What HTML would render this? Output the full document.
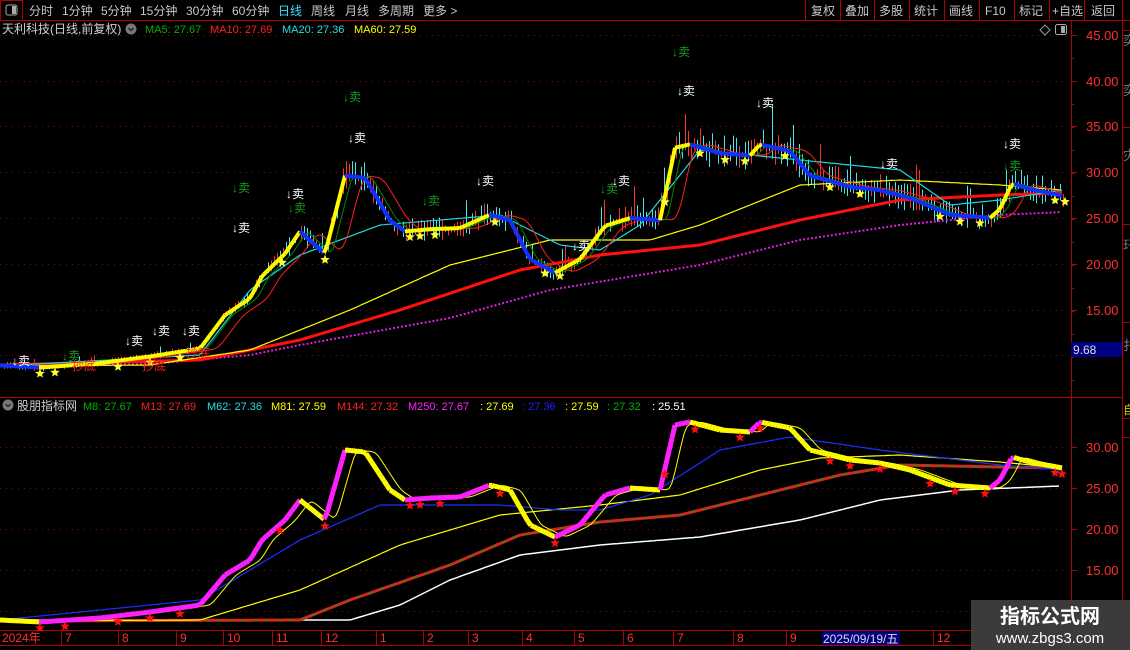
<!DOCTYPE html>
<html><head><meta charset="utf-8"><style>
body{margin:0;background:#000;width:1130px;height:650px;overflow:hidden;font-family:"Liberation Sans","Noto Sans CJK SC",sans-serif;}
svg{position:absolute;left:0;top:0}
</style></head><body>
<svg id="s" width="1130" height="650" xmlns="http://www.w3.org/2000/svg" font-family="Liberation Sans, Noto Sans CJK SC, sans-serif">
<rect width="1130" height="650" fill="#000"/>
<line x1="0" y1="20.5" x2="1130" y2="20.5" stroke="#b00000"/>
<rect x="0.5" y="0.5" width="22" height="20" fill="none" stroke="#b00000"/>
<rect x="6" y="5" width="11" height="10" rx="2" fill="none" stroke="#aaa"/><rect x="12" y="6" width="4" height="8" fill="#aaa"/>
<g font-size="12" fill="#c8c8c8">
<text x="29" y="15">分时</text><text x="62" y="15">1分钟</text><text x="101" y="15">5分钟</text><text x="140" y="15">15分钟</text><text x="186" y="15">30分钟</text><text x="232" y="15">60分钟</text>
<text x="278" y="15" fill="#3ee0ff">日线</text><text x="311" y="15">周线</text><text x="345" y="15">月线</text><text x="378" y="15">多周期</text><text x="423" y="15">更多 &gt;</text>
<text x="811" y="15">复权</text><text x="845" y="15">叠加</text><text x="879" y="15">多股</text><text x="914" y="15">统计</text><text x="949" y="15">画线</text><text x="985" y="15">F10</text><text x="1019" y="15">标记</text><text x="1052" y="15">+自选</text><text x="1091" y="15">返回</text>
</g>
<g stroke="#b00000"><line x1="805.5" y1="0" x2="805.5" y2="20"/><line x1="840.5" y1="0" x2="840.5" y2="20"/><line x1="874.5" y1="0" x2="874.5" y2="20"/><line x1="909.5" y1="0" x2="909.5" y2="20"/><line x1="944.5" y1="0" x2="944.5" y2="20"/><line x1="979.5" y1="0" x2="979.5" y2="20"/><line x1="1014.5" y1="0" x2="1014.5" y2="20"/><line x1="1049.5" y1="0" x2="1049.5" y2="20"/><line x1="1084.5" y1="0" x2="1084.5" y2="20"/><line x1="1122.5" y1="0" x2="1122.5" y2="20"/></g>
<g stroke="#b00000"><line x1="1071.5" y1="20" x2="1071.5" y2="645"/><line x1="1122.5" y1="20" x2="1122.5" y2="650"/><line x1="0" y1="397.5" x2="1122" y2="397.5"/><line x1="0" y1="630.5" x2="1130" y2="630.5"/><line x1="0" y1="645.5" x2="1130" y2="645.5"/>
<line x1="1122" y1="30.5" x2="1130" y2="30.5"/><line x1="1122" y1="127.5" x2="1130" y2="127.5"/><line x1="1122" y1="224.5" x2="1130" y2="224.5"/><line x1="1122" y1="322.5" x2="1130" y2="322.5"/><line x1="1122" y1="418.5" x2="1130" y2="418.5"/><line x1="1122" y1="437.5" x2="1130" y2="437.5"/></g>
<g font-size="13" fill="#777"><text x="1123" y="45">奕</text><text x="1123" y="95">奕</text><text x="1123" y="160">灾</text><text x="1123" y="250">玕</text><text x="1123" y="350">扌</text></g>
<text x="1123" y="414" font-size="12" fill="#cc0">自</text>
<g id="grid"></g>
<g font-size="13" fill="#ff3030" id="ylab"></g>
<rect x="1071" y="342" width="51" height="15" fill="#000080"/>
<text x="1073" y="354" font-size="12" fill="#ddd">9.68</text>
<text x="2" y="33" font-size="12" fill="#d0d0d0">天利科技(日线,前复权)</text>
<circle cx="131" cy="29" r="5.5" fill="#777"/><path d="M128.5 28l2.5 2.5 2.5-2.5" stroke="#222" fill="none" stroke-width="1.3"/>
<g font-size="11"><text x="145" y="33" fill="#00b000">MA5: 27.67</text><text x="210" y="33" fill="#ff2020">MA10: 27.69</text><text x="282" y="33" fill="#20e0e0">MA20: 27.36</text><text x="354" y="33" fill="#ffff00">MA60: 27.59</text></g>
<path d="M1040 30l5-5 5 5-5 5z" fill="none" stroke="#999"/>
<rect x="1055.5" y="24.5" width="11" height="10" rx="2" fill="none" stroke="#aaa"/><rect x="1061" y="26" width="4" height="7" fill="#aaa"/>
<circle cx="8" cy="405" r="5.5" fill="#777"/><path d="M5.5 404l2.5 2.5 2.5-2.5" stroke="#222" fill="none" stroke-width="1.3"/>
<text x="17" y="410" font-size="12" fill="#d0d0d0">股朋指标网</text>
<g font-size="11"><text x="83" y="410" fill="#00b000">M8: 27.67</text><text x="141" y="410" fill="#ff2020">M13: 27.69</text><text x="207" y="410" fill="#20e0e0">M62: 27.36</text><text x="271" y="410" fill="#ffff00">M81: 27.59</text><text x="337" y="410" fill="#ff2020">M144: 27.32</text><text x="408" y="410" fill="#ff20ff">M250: 27.67</text><text x="480" y="410" fill="#ffff00">: 27.69</text><text x="522" y="410" fill="#2020ff">: 27.36</text><text x="565" y="410" fill="#ffff00">: 27.59</text><text x="607" y="410" fill="#00b000">: 27.32</text><text x="652" y="410" fill="#fff">: 25.51</text></g>
<g id="plot"></g>
<g font-size="12" fill="#ff3030" id="dates"></g>
<rect x="822" y="631" width="78" height="14" fill="#000080"/>
<text x="823" y="643" font-size="12" fill="#ddd">2025/09/19/五</text>
<rect x="971" y="600" width="159" height="50" fill="#3c3a3a"/>
<text x="1050" y="623" font-size="20" font-weight="bold" fill="#fff" text-anchor="middle">指标公式网</text>
<text x="1050" y="643" font-size="15" fill="#fff" text-anchor="middle">www.zbgs3.com</text>
</svg>
<script>
var NS="http://www.w3.org/2000/svg";
function el(p,t,a,txt){var e=document.createElementNS(NS,t);for(var k in a)e.setAttribute(k,a[k]);if(txt)e.textContent=txt;document.getElementById(p).appendChild(e);return e;}
function interp(pts,x){for(var i=0;i<pts.length-1;i++){if(x<=pts[i+1][0]){var a=pts[i],b=pts[i+1];return a[1]+(b[1]-a[1])*(x-a[0])/(b[0]-a[0]);}}return pts[pts.length-1][1];}
function poly(pts,step){var s=[];for(var x=pts[0][0];x<=pts[pts.length-1][0];x+=step)s.push(x+","+interp(pts,x).toFixed(1));return s.join(" ");}
[35,81,126,172,218,264,310,355].forEach(function(y,i){el("grid","line",{x1:0,y1:y+.5,x2:1068,y2:y+.5,stroke:"#900",'stroke-dasharray':"1 5"});el("grid","line",{x1:1071,y1:y+.5,x2:1077,y2:y+.5,stroke:"#b00000"});if(i<7)el("ylab","text",{x:1086,y:y+5},["45.00","40.00","35.00","30.00","25.00","20.00","15.00"][i]);});
for(var y=58;y<390;y+=23)el("grid","line",{x1:1071,y1:y+.5,x2:1074,y2:y+.5,stroke:"#b00000"});
[447,488,529,570,611].forEach(function(y,i){el("grid","line",{x1:0,y1:y+.5,x2:1068,y2:y+.5,stroke:"#900",'stroke-dasharray':"1 5"});el("grid","line",{x1:1071,y1:y+.5,x2:1077,y2:y+.5,stroke:"#b00000"});if(i<4)el("ylab","text",{x:1086,y:y+5},["30.00","25.00","20.00","15.00"][i]);});
var L=[[0,620],[40,622],[100,618],[150,612],[200,605],[225,575],[250,560],[262,540],[285,520],[300,500],[325,520],[345,450],[365,452],[390,490],[405,500],[430,498],[460,497],[490,485],[510,490],[530,525],[555,537],[580,525],[605,495],[630,488],[660,490],[675,425],[690,422],[720,430],[750,432],[760,422],[790,428],[810,450],[850,460],[880,463],[910,470],[950,485],[990,488],[1000,480],[1012,457],[1030,462],[1062,468]];
function up(y){return (y-324)/0.896+35;}
var U=L.map(function(p){return [p[0],up(p[1])];});
var seed=7;function rnd(){seed=(seed*16807)%2147483647;return seed/2147483647;}
for(var x=4;x<1064;x+=3){var c=interp(U,x),pc=interp(U,x-3);var v=Math.max(2,(365-c)*0.055);var hi=c-rnd()*v*1.6-1,lo=c+rnd()*v*1.4+1;if(rnd()<0.06)hi-=v*2.5;var col=c<pc?"#ff3030":"#40e8f0";if(rnd()<0.35)col=col=="#ff3030"?"#40e8f0":"#ff3030";el("plot","line",{x1:x+.5,y1:hi,x2:x+.5,y2:lo,stroke:col});}
var mag=[[0,366],[150,364],[250,355],[300,345],[450,318],[550,290],[700,265],[800,240],[900,225],[1000,215],[1062,212]];
el("plot","polyline",{points:poly(mag,4),fill:"none",stroke:"#e020e0","stroke-width":2,"stroke-dasharray":"2 2"});
el("plot","polyline",{points:poly([[0,365],[200,360],[300,340],[400,310],[520,270],[600,255],[700,245],[800,220],[900,200],[1000,195],[1062,193]],3),fill:"none",stroke:"#ff1010","stroke-width":3});
el("plot","polyline",{points:poly([[0,366],[150,365],[250,350],[350,310],[450,265],[550,240],[650,240],[700,225],[800,185],[900,180],[1000,185],[1062,190]],3),fill:"none",stroke:"#ffff00","stroke-width":1.2});
el("plot","polyline",{points:poly([[0,366],[200,355],[250,290],[300,255],[380,225],[500,215],[560,245],[600,250],[640,225],[700,150],[800,160],[900,170],[950,205],[1000,200],[1062,190]],3),fill:"none",stroke:"#20d8e0","stroke-width":1.2});
function smooth(pts,k){var out=[];for(var x=0;x<=1062;x+=3){var s=0,n=0;for(var d=-k;d<=k;d+=3){s+=interp(pts,Math.max(0,Math.min(1062,x-d*0.2-k*0.6)));n++;}out.push([x,s/n]);}return out;}
el("plot","polyline",{points:poly(smooth(U,30),3),fill:"none",stroke:"#ff2020","stroke-width":1});
el("plot","polyline",{points:poly(smooth(U,12),3),fill:"none",stroke:"#008800","stroke-width":1});
for(var x=0;x<1062;x+=3){var a=interp(U,x),b=interp(U,x+3);el("plot","line",{x1:x,y1:a,x2:x+3,y2:b,stroke:b<=a?"#ffff00":"#1030ff","stroke-width":4});}
el("plot","polyline",{points:poly([[0,620],[350,620],[400,605],[450,580],[520,555],[600,545],[700,537],[800,520],[880,500],[960,490],[1060,486]],3),fill:"none",stroke:"#fff","stroke-width":1.5});
el("plot","polyline",{points:poly([[0,621],[300,620],[350,600],[450,565],[520,535],[600,522],[680,515],[760,495],[840,475],[900,465],[1000,467],[1062,468]],3),fill:"none",stroke:"#e02020","stroke-width":3});
el("plot","polyline",{points:poly([[0,621],[300,620],[350,600],[450,565],[520,535],[600,522],[680,515],[760,495],[840,475],[900,465],[1000,467],[1062,468]],3),fill:"none",stroke:"#00a000","stroke-width":1,"stroke-dasharray":"6 6"});
el("plot","polyline",{points:poly([[0,621],[200,620],[300,590],[400,545],[500,515],[600,505],[680,495],[760,470],[820,458],[900,455],[1000,462],[1062,468]],3),fill:"none",stroke:"#ffff00","stroke-width":1.2});
el("plot","polyline",{points:poly([[0,620],[200,600],[300,540],[380,505],[500,505],[560,510],[600,510],[650,495],[720,450],[790,437],[880,450],[1000,465],[1062,470]],3),fill:"none",stroke:"#1a30ff","stroke-width":1.2});
el("plot","polyline",{points:poly(smooth(L,18),3),fill:"none",stroke:"#ffff00","stroke-width":1});
for(var x=0;x<1062;x+=3){var a=interp(L,x),b=interp(L,x+3);el("plot","line",{x1:x,y1:a,x2:x+3,y2:b,stroke:b<=a?"#ff20ff":"#ffff00","stroke-width":5});}
function star(x,y,c,r){var p=[];for(var i=0;i<10;i++){var rr=i%2?r*0.45:r,an=-Math.PI/2+i*Math.PI/5;p.push((x+rr*Math.cos(an)).toFixed(1)+","+(y+rr*Math.sin(an)).toFixed(1));}el("plot","polygon",{points:p.join(" "),fill:c});}
[40,55,118,150,180,282,325,410,420,435,495,545,560,665,700,725,745,785,830,860,940,960,980,1055,1065].forEach(function(x){star(x,interp(U,x)+6,"#ffff30",5);});
[40,65,118,150,180,280,325,410,420,440,500,555,665,695,740,760,830,850,880,930,955,985,1055,1062].forEach(function(x){star(x,interp(L,x)+6,"#ff1010",5);});
[[12,365,"#fff"],[62,360,"#1a9a1a"],[125,345,"#fff"],[152,335,"#fff"],[182,335,"#fff"],[232,232,"#fff"],[232,192,"#1a9a1a"],[286,198,"#fff"],[288,212,"#1a9a1a"],[343,101,"#1a9a1a"],[348,142,"#fff"],[422,205,"#1a9a1a"],[476,185,"#fff"],[572,250,"#fff"],[600,193,"#1a9a1a"],[612,185,"#fff"],[672,56,"#1a9a1a"],[677,95,"#fff"],[756,107,"#fff"],[880,168,"#fff"],[1003,148,"#fff"],[1003,170,"#1a9a1a"]].forEach(function(s){el("plot","text",{x:s[0],y:s[1],"font-size":12,fill:s[2]},"↓卖");});
[[72,370],[142,370],[186,357]].forEach(function(s){el("plot","text",{x:s[0],y:s[1],"font-size":12,fill:"#ff2020"},"抄底");});
[["2024年",2],["7",65],["8",122],["9",180],["10",227],["11",276],["12",325],["1",380],["2",427],["3",472],["4",526],["5",578],["6",627],["7",677],["8",737],["9",790],["12",937]].forEach(function(d){el("dates","text",{x:d[1],y:642},d[0]);el("dates","line",{x1:d[1]-3.5,y1:631,x2:d[1]-3.5,y2:645,stroke:"#b00000"});});
</script>
</body></html>
